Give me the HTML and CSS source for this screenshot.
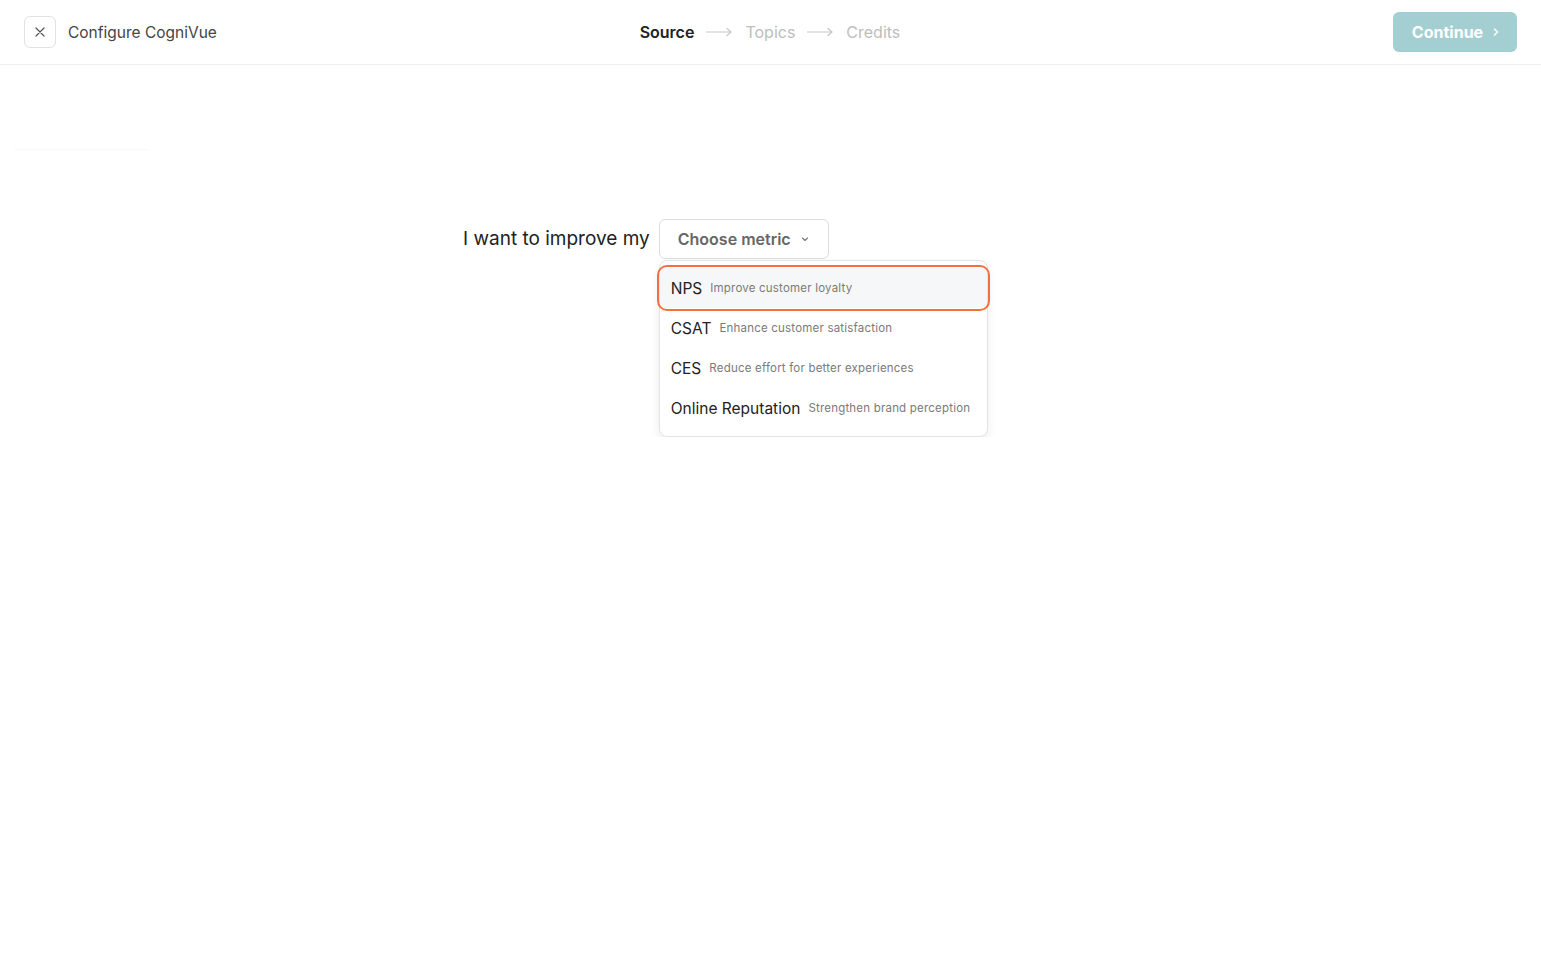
FILE: index.html
```html
<!DOCTYPE html>
<html lang="en">
<head>
    <meta charset="UTF-8">
    <meta name="viewport" content="width=device-width, initial-scale=1.0">
    <title>Configure CogniVue</title>
    <link rel="stylesheet" href="styles.css">
</head>
<body>
    <div class="header">
        <div class="header-left">
            <button class="close-btn" aria-label="Close">
                <svg width="10" height="10" viewBox="0 0 10 10"><path d="M1 1L9 9M9 1L1 9" stroke="#555" stroke-width="1.2" stroke-linecap="round"/></svg>
            </button>
            <span class="header-title">Configure CogniVue</span>
        </div>
        <div class="steps">
            <span class="step active">Source</span>
            <svg class="step-arrow" width="27" height="10" viewBox="0 0 27 10"><path d="M0 5H25M21 1.5L25 5L21 8.5" stroke="#c8c8c8" stroke-width="1.2" fill="none" stroke-linecap="round" stroke-linejoin="round"/></svg>
            <span class="step">Topics</span>
            <svg class="step-arrow" width="27" height="10" viewBox="0 0 27 10"><path d="M0 5H25M21 1.5L25 5L21 8.5" stroke="#c8c8c8" stroke-width="1.2" fill="none" stroke-linecap="round" stroke-linejoin="round"/></svg>
            <span class="step">Credits</span>
        </div>
        <div class="header-right">
            <button class="continue-btn">Continue
                <svg width="8" height="10" viewBox="0 0 8 10"><path d="M2.5 2L5.5 5L2.5 8" stroke="#fff" stroke-width="1.5" fill="none" stroke-linecap="round" stroke-linejoin="round"/></svg>
            </button>
        </div>
    </div>
    <div class="faint-line"></div>
    <div class="main">
        <div class="sentence">
            <span class="sentence-text">I want to improve my</span>
            <div class="select-wrap">
                <button class="select-btn">Choose metric
                    <svg width="10" height="10" viewBox="0 0 10 10"><path d="M2.5 4L5 6.5L7.5 4" stroke="#777" stroke-width="1.1" fill="none" stroke-linecap="round" stroke-linejoin="round"/></svg>
                </button>
                <div class="dropdown">
                    <div class="option highlighted"><span class="opt-name">NPS</span><span class="opt-desc">Improve customer loyalty</span></div>
                    <div class="option"><span class="opt-name">CSAT</span><span class="opt-desc">Enhance customer satisfaction</span></div>
                    <div class="option"><span class="opt-name">CES</span><span class="opt-desc">Reduce effort for better experiences</span></div>
                    <div class="option"><span class="opt-name">Online Reputation</span><span class="opt-desc">Strengthen brand perception</span></div>
                </div>
            </div>
        </div>
    </div>
</body>
</html>
```

FILE: styles.css
```css
body {
    margin: 0;
    padding: 0;
    background: #fff;
    font-family: Inter, 'Open Sans', Arial, sans-serif;
    color: #222;
}
.header {
    height: 64px;
    border-bottom: 1px solid #eef0f2;
    display: grid;
    grid-template-columns: 1fr auto 1fr;
    align-items: center;
    padding: 0 24px;
}
.header-left {
    display: flex;
    align-items: center;
    gap: 12px;
}
.close-btn {
    width: 32px;
    height: 32px;
    border: 1px solid #e2e2e2;
    border-radius: 6px;
    background: #fff;
    display: flex;
    align-items: center;
    justify-content: center;
    padding: 0;
}
.header-title {
    font-size: 15.5px;
    color: #444;
}
.steps {
    display: flex;
    align-items: center;
    gap: 12px;
    font-size: 16px;
    margin-left: -1px;
}
.step {
    color: #bdbdbd;
}
.step.active {
    color: #222;
    font-weight: 600;
}
.header-right {
    display: flex;
    justify-content: flex-end;
}
.continue-btn {
    width: 124px;
    height: 40px;
    background: #a4cfd2;
    color: #fff;
    border: none;
    border-radius: 6px;
    font-family: inherit;
    font-size: 16px;
    font-weight: 700;
    display: flex;
    align-items: center;
    justify-content: center;
    gap: 9px;
    padding: 0 0 0 2px;
}
.faint-line {
    width: 133px;
    margin: 84px 0 0 15px;
    border-top: 1px dotted #f3f3f3;
}
.main {
    padding: 69px 0 0 463px;
}
.sentence {
    display: flex;
    align-items: flex-start;
    gap: 9px;
}
.sentence-text {
    font-size: 19px;
    line-height: 40px;
    color: #222;
}
.select-wrap {
    display: flex;
    flex-direction: column;
    align-items: flex-start;
    gap: 1px;
}
.select-btn {
    width: 170px;
    height: 40px;
    border: 1px solid #dedede;
    border-radius: 6px;
    background: #fff;
    font-family: inherit;
    font-size: 16px;
    font-weight: 600;
    color: #666;
    display: flex;
    align-items: center;
    justify-content: center;
    gap: 9px;
    padding: 0;
}
.dropdown {
    width: 329px;
    box-sizing: border-box;
    background: #fff;
    border: 1px solid #e4e4e4;
    border-radius: 8px;
    box-shadow: 0 4px 10px rgba(0,0,0,0.08);
    padding: 7px 0 8px 0;
}
.option {
    height: 40px;
    display: flex;
    align-items: center;
    gap: 8px;
    padding: 0 12px 0 11px;
    box-sizing: border-box;
}
.option.highlighted {
    background: #f6f7f9;
    border-radius: 7px;
    outline: 2px solid #f3703f;
    outline-offset: 1px;
}
.opt-name {
    font-size: 15.5px;
    color: #222;
}
.opt-desc {
    font-size: 11.5px;
    letter-spacing: 0.2px;
    color: #7a7a7a;
}
```
